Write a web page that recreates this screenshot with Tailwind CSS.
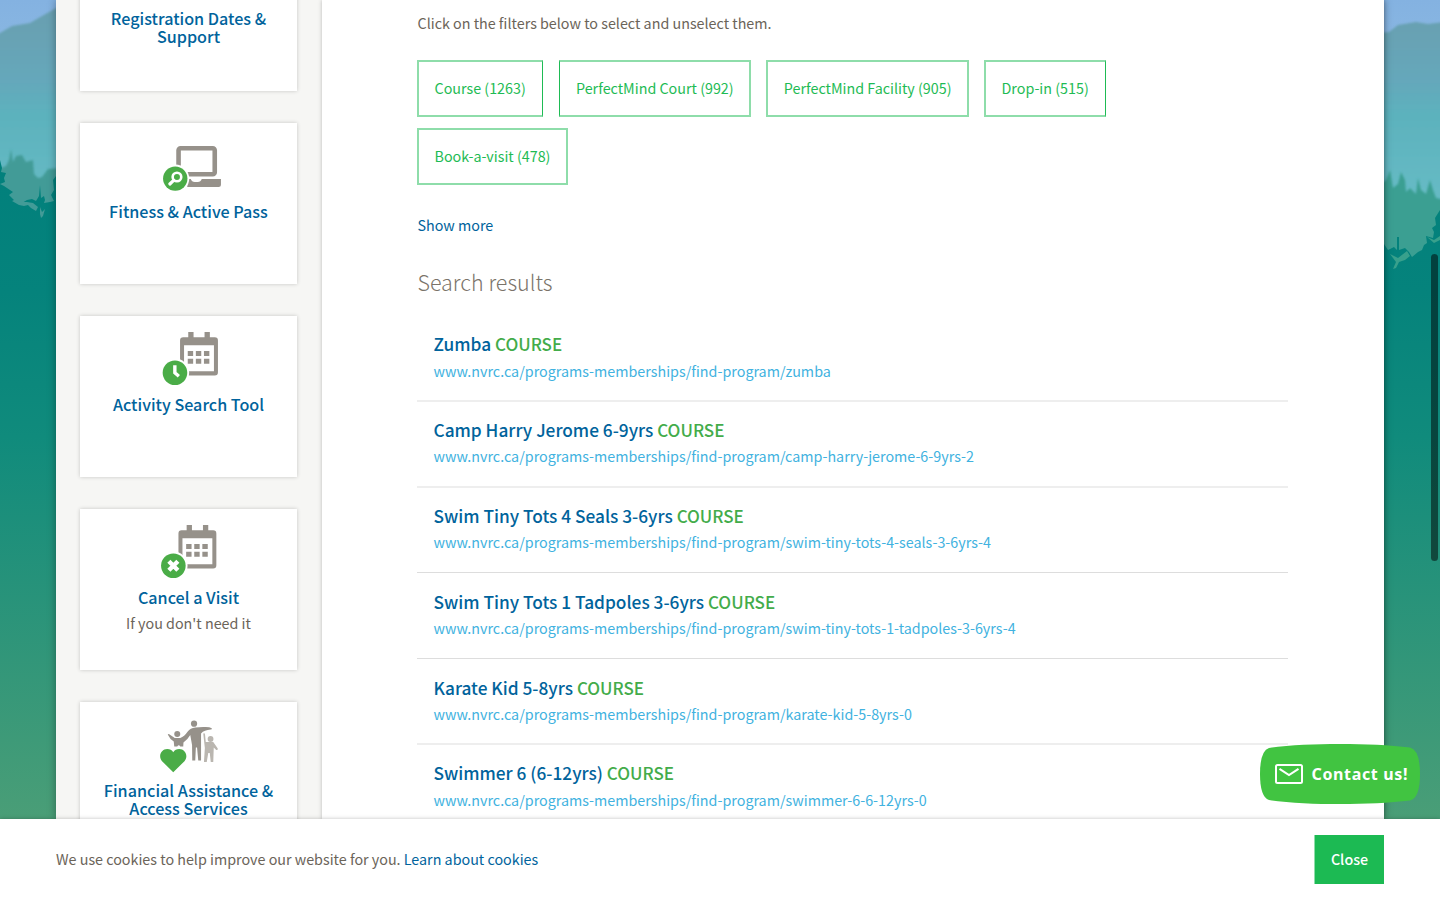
<!DOCTYPE html>
<html lang="en">
<head>
<meta charset="utf-8">
<title>Find a program</title>
<script src="https://cdn.jsdelivr.net/npm/@tailwindcss/browser@4"></script>
</head>
<body class="font-['Noto_Sans_CJK_SC',sans-serif] text-[14.32px] text-[#6b6459]">
<div class="relative h-[900px] w-[1440px] overflow-hidden">

<!-- forest backdrop -->
<svg class="absolute inset-0" width="1440" height="900" viewBox="0 0 1440 900">
  <defs>
    <linearGradient id="sky" x1="0" y1="0" x2="0" y2="1"><stop offset="0" stop-color="#84b2e1"/><stop offset="1" stop-color="#8ab8e2"/></linearGradient>
    <linearGradient id="hill" gradientUnits="userSpaceOnUse" x1="0" y1="10" x2="0" y2="190"><stop offset="0" stop-color="#699fb0"/><stop offset=".4" stop-color="#65a8bb"/><stop offset=".58" stop-color="#5cb2bd"/><stop offset="1" stop-color="#66bac4"/></linearGradient>
    <linearGradient id="near" gradientUnits="userSpaceOnUse" x1="0" y1="160" x2="0" y2="820"><stop offset="0" stop-color="#01807c"/><stop offset=".2" stop-color="#05837c"/><stop offset=".42" stop-color="#108b7c"/><stop offset="1" stop-color="#4a9e77"/></linearGradient>
    <linearGradient id="nearR" gradientUnits="userSpaceOnUse" x1="0" y1="160" x2="0" y2="820"><stop offset="0" stop-color="#01807c"/><stop offset=".2" stop-color="#05837c"/><stop offset=".42" stop-color="#108b7c"/><stop offset="1" stop-color="#4a9e77"/></linearGradient>
    <filter id="soft" x="-20%" y="-20%" width="140%" height="140%"><feGaussianBlur stdDeviation="1.3"/></filter>
  </defs>
  <rect width="1440" height="60" fill="url(#sky)"/>
  <path filter="url(#soft)" fill="url(#hill)" d="M-20 44L0 33L12 26L30 23L42 16L58 7L70 0V300H-20Z"/>
  <path filter="url(#soft)" fill="url(#hill)" d="M1370 34L1389 32L1398 25L1416 22L1428 24L1460 20V300H1370Z"/>
  <path filter="url(#soft)" fill="#429b97" d="M-10 172L6 166L9 160L11 149L13 162L16 156L22 155L26 162L33 160L34 174L38 178L42 177L48 169L60 168V260H-10Z"/>
  <path filter="url(#soft)" fill="#3a9f92" d="M1376 188L1386 180L1390 170L1393 188L1398 184L1401 172L1405 180L1406 192L1410 188L1416 194L1418 178L1421 190L1426 194L1430 180L1433 190L1436 198L1450 201V300H1376Z"/>
  <path fill="url(#near)" d="M0 160L2 168L1 172L6 173L4 178L5 182L0 184L4 186L13 192L9 195L15 201L22 203L27 200L32 199L36 201L39 196L40 185L41 198L44 196L45 200L44 203L50 202L54 201L51 195L54 190L53 180L56 176V900H0Z"/>
  <path fill="#429b97" d="M12 201L16 199L21 202L27 202L33 203L38 207L36 211L31 208L28 205L24 206L19 205ZM40 207L42 212L45 209L43 216L41 218L40 214Z"/>
  <path fill="url(#nearR)" d="M1384 244L1388 250L1394 247L1397 250L1397 237L1399 237L1399 250L1405 248L1409 252L1412 257L1418 252L1422 250L1424 245L1427 243L1426 236L1433 238L1434 232L1432 228L1436 225L1435 218L1440 210V900H1384Z"/>
  <path fill="#38a08c" d="M1390 254L1398 258L1407 251L1410 256L1405 260L1399 262L1396 268L1393 269L1396 262ZM1427 237L1434 240L1440 236V240L1434 243Z"/>
</svg>

<div class="relative mx-[56px] flex h-[819px] overflow-visible bg-white shadow-[0_0_8px_rgba(0,0,0,0.35)]">
  <aside class="h-full w-[266px] shrink-0 overflow-hidden bg-[#f6f6f4]">
    <nav class="-mt-[70px] flex flex-col gap-8 pl-6 text-center text-[16.15px] leading-[18px] font-medium text-[#00639c]">
      <a class="h-[161px] w-[217px] bg-white px-4 pt-[79px] shadow-[0_0_4px_rgba(0,0,0,0.2)]">Registration Dates &amp; Support</a>

      <a class="flex h-[161px] w-[217px] flex-col items-center bg-white pt-[5px] shadow-[0_0_4px_rgba(0,0,0,0.2)]">
        <svg class="mb-1 shrink-0" width="80" height="70" viewBox="148.75 128 80 70">
          <rect x="178.3" y="148.3" width="36.2" height="26" rx="2" fill="none" stroke="#96918a" stroke-width="4.6"/>
          <path fill="#96918a" d="M187 179h3.500q1 3 4 3h3q3 0 4-3H220.700v5.500q0 2.500-2.500 2.500H187z"/>
          <circle cx="175" cy="178.600" r="14" fill="#fff"/><circle cx="175" cy="178.600" r="12.200" fill="#4aac47"/>
          <circle cx="176.700" cy="177" r="4.300" fill="none" stroke="#fff" stroke-width="2.600"/>
          <path d="M173.400 180.400L169.600 184" stroke="#fff" stroke-width="3.200" stroke-linecap="round"/>
        </svg>Fitness &amp; Active Pass</a>

      <a class="flex h-[161px] w-[217px] flex-col items-center bg-white pt-[5px] shadow-[0_0_4px_rgba(0,0,0,0.2)]">
        <svg class="mb-1 shrink-0" width="80" height="70" viewBox="148.75 321 80 70">
          <path fill="#96918a" d="M188 332h5.300v5.300h11V332h5.300v5.300h4.900q3.200 0 3.200 3.200v31.700q0 3.200-3.200 3.200H183q-3.200 0-3.200-3.200v-31.700q0-3.200 3.200-3.200h5zM183.800 345.300v26h29.900v-26z"/>
          <path fill="#96918a" d="M187.500 351h5.400v5h-5.400zM195.600 351h5.400v5h-5.400zM203.700 351h5.400v5h-5.400zM187.500 358.800h5.400v5h-5.400zM195.600 358.800h5.400v5h-5.400zM203.700 358.800h5.400v5h-5.400z"/>
          <circle cx="174.700" cy="372.700" r="14.200" fill="#fff"/><circle cx="174.700" cy="372.700" r="12.300" fill="#4aac47"/>
          <path d="M174.600 365.300V372.800L178.600 376.300" fill="none" stroke="#fff" stroke-width="3.400"/>
        </svg>Activity Search Tool</a>

      <a class="flex h-[161px] w-[217px] flex-col items-center bg-white pt-[5px] shadow-[0_0_4px_rgba(0,0,0,0.2)]">
        <svg class="mb-1 shrink-0" width="80" height="70" viewBox="150.35 321 80 70">
          <path fill="#96918a" d="M188 332h5.300v5.300h11V332h5.300v5.300h4.900q3.200 0 3.200 3.200v31.700q0 3.200-3.200 3.200H183q-3.200 0-3.200-3.200v-31.700q0-3.200 3.200-3.200h5zM183.800 345.300v26h29.900v-26z"/>
          <path fill="#96918a" d="M187.500 351h5.400v5h-5.400zM195.600 351h5.400v5h-5.400zM203.700 351h5.400v5h-5.400zM187.500 358.800h5.400v5h-5.400zM195.600 358.800h5.400v5h-5.400zM203.700 358.800h5.400v5h-5.400z"/>
          <circle cx="174.700" cy="372.700" r="14.200" fill="#fff"/><circle cx="174.700" cy="372.700" r="12.300" fill="#4aac47"/>
          <path d="M170.200 368.200l9 9m0-9l-9 9" stroke="#fff" stroke-width="4.400"/>
        </svg>Cancel a Visit
        <span class="mt-2 text-[14.32px] font-normal text-[#6b6459]">If you don't need it</span></a>

      <a class="flex h-[161px] w-[217px] flex-col items-center bg-white px-4 pt-[5px] shadow-[0_0_4px_rgba(0,0,0,0.2)]">
        <svg class="mb-1 shrink-0" width="80" height="70" viewBox="148.75 707 80 70">
          <g fill="#96918a"><circle cx="193.800" cy="723.700" r="3.100"/><circle cx="177" cy="734" r="3"/>
          <path d="M167.500 734.500Q168 733.700 169 734.200L174.500 738H180Q184 736.500 187.500 731.500Q190 728.300 195 727.600L203 727Q209 726.500 211.500 728.300Q212 729.500 210.500 729.600Q204 730 200.800 733.500V760.500H198L196.800 747.500H195.600L195 760.500H192L191.800 745L190 735Q187 740 183.200 742.500L183 746.500H180Q178.500 744 177 746.500H174L173.500 741.500Q169.500 739 167.500 734.500Z"/></g>
          <g fill="#bab6b0"><circle cx="210.300" cy="739" r="2.900"/>
          <path d="M203 733.500Q204.500 732.500 204.800 734.500L205.500 742H213L217.500 748.500Q217.800 750.500 216 750L213.500 747.500L213 762H210.500L209.500 753H208L206.500 762H203.700L204.600 748Z"/></g>
          <path fill="#4aac47" d="M173 772.300L161.800 761.200C157.500 756 161 749 167 749Q171 749 173 752.300Q175 749 179 749C185 749 188.500 756 184.200 761.200Z"/>
        </svg><span>Financial Assistance &amp; Access Services</span></a>
    </nav>
  </aside>

  <main class="h-full flex-1 overflow-hidden bg-white pl-[95.5px] shadow-[0_0_4px_rgba(0,0,0,0.25)]">
    <p class="mt-[11px] h-[25px] leading-6">Click on the filters below to select and unselect them.</p>
    <div class="-ml-[0.5px] mt-[24px] flex w-[700px] flex-wrap gap-y-[11px] leading-[51px] text-[#1ebb54]">
      <a class="mr-4 h-[57px] w-[126px] border-2 border-r border-[#8eddaa] border-r-[#1ebb54] pl-[15.5px]">Course (1263)</a>
      <a class="mr-[15px] h-[57px] w-[192px] border-2 border-l border-[#8eddaa] border-l-[#1ebb54] pl-[16px]">PerfectMind Court (992)</a>
      <a class="mr-[15px] h-[57px] w-[203px] border-2 border-[#8eddaa] pl-[15.8px]">PerfectMind Facility (905)</a>
      <a class="h-[57px] w-[122px] border-2 border-r border-[#8eddaa] border-r-[#1ebb54] pl-[15.5px]">Drop-in (515)</a>
      <a class="h-[57px] w-[151px] border-2 border-[#8eddaa] pl-[15.5px]">Book-a-visit (478)</a>
    </div>
    <a class="mt-[28px] block h-6 leading-6 text-[#00639c]">Show more</a>
    <h2 class="mt-[29px] h-[33px] text-[21.46px] leading-8 font-light text-[#7a7369]">Search results</h2>

    <div class="-ml-[0.5px] mt-[17px] w-[871px] text-[#41b2e0]">
      <div class="h-[86px] border-b-2 border-[#eee] px-[16.5px] pt-[14px] leading-6"><h3 class="h-7 text-[17.28px] leading-7 font-medium text-[#00639c]">Zumba <span class="text-[17.02px] text-[#43ac4a]">COURSE</span></h3><p class="mt-px">www.nvrc.ca/programs-memberships/find-program/zumba</p></div>
      <div class="h-[86px] border-b-2 border-[#eee] px-[16.5px] pt-[14px] leading-6"><h3 class="h-7 text-[17.28px] leading-7 font-medium text-[#00639c]">Camp Harry Jerome 6-9yrs <span class="text-[17.02px] text-[#43ac4a]">COURSE</span></h3><p>www.nvrc.ca/programs-memberships/find-program/camp-harry-jerome-6-9yrs-2</p></div>
      <div class="h-[85px] border-b border-[#ddd] px-[16.5px] pt-[14px] leading-6"><h3 class="h-7 text-[17.28px] leading-7 font-medium text-[#00639c]">Swim Tiny Tots 4 Seals 3-6yrs <span class="text-[17.02px] text-[#43ac4a]">COURSE</span></h3><p>www.nvrc.ca/programs-memberships/find-program/swim-tiny-tots-4-seals-3-6yrs-4</p></div>
      <div class="h-[86px] border-b border-[#ddd] px-[16.5px] pt-[15px] leading-6"><h3 class="h-7 text-[17.28px] leading-7 font-medium text-[#00639c]">Swim Tiny Tots 1 Tadpoles 3-6yrs <span class="text-[17.02px] text-[#43ac4a]">COURSE</span></h3><p>www.nvrc.ca/programs-memberships/find-program/swim-tiny-tots-1-tadpoles-3-6yrs-4</p></div>
      <div class="h-[86px] border-b-2 border-[#eee] px-[16.5px] pt-[15px] leading-6"><h3 class="h-7 text-[17.28px] leading-7 font-medium text-[#00639c]">Karate Kid 5-8yrs <span class="text-[17.02px] text-[#43ac4a]">COURSE</span></h3><p>www.nvrc.ca/programs-memberships/find-program/karate-kid-5-8yrs-0</p></div>
      <div class="h-[86px] px-[16.5px] pt-[14px] leading-6"><h3 class="h-7 text-[17.28px] leading-7 font-medium text-[#00639c]">Swimmer 6 (6-12yrs) <span class="text-[17.02px] text-[#43ac4a]">COURSE</span></h3><p class="mt-px">www.nvrc.ca/programs-memberships/find-program/swimmer-6-6-12yrs-0</p></div>
    </div>
  </main>
</div>

<footer class="relative flex h-[81px] items-center justify-between bg-white px-[56px] shadow-[0_0_4px_rgba(0,0,0,0.25)]">
  <p class="mb-0.5 leading-6">We use cookies to help improve our website for you. <a class="text-[#00639c]">Learn about cookies</a></p>
  <button class="h-[49px] w-[70px] border-l border-[#8eddaa] bg-[#1cba53] pb-0.5 text-[14.32px] leading-[47px] font-medium text-white">Close</button>
</footer>

<!-- floating contact button -->
<div class="absolute top-[744px] left-[1260px] h-[60px] w-[160px]">
  <svg class="absolute inset-0" width="160" height="60" viewBox="0 0 160 60"><path fill="#41c441" d="M9 4C30 1 55 0 80 0S130 1 150 3.500Q160 6 160 30T150 56.500C130 59 105 60 80 60S30 59 9 56Q0 53 0 30T9 4Z"/>
    <rect x="16" y="21" width="26" height="18" rx="1.500" fill="none" stroke="#fff" stroke-width="2"/><path d="M19.500 24.800L29 31L38.500 24.800" fill="none" stroke="#fff" stroke-width="2"/></svg>
  <span class="absolute top-[18px] left-[51.500px] font-['Noto_Sans',sans-serif] text-base leading-6 font-bold tracking-[0.64px] whitespace-nowrap text-white">Contact us!</span>
</div>

<div class="absolute top-[254px] left-[1431px] h-[307px] w-[7px] rounded-full bg-black/50"></div>
</div>
</body>
</html>
